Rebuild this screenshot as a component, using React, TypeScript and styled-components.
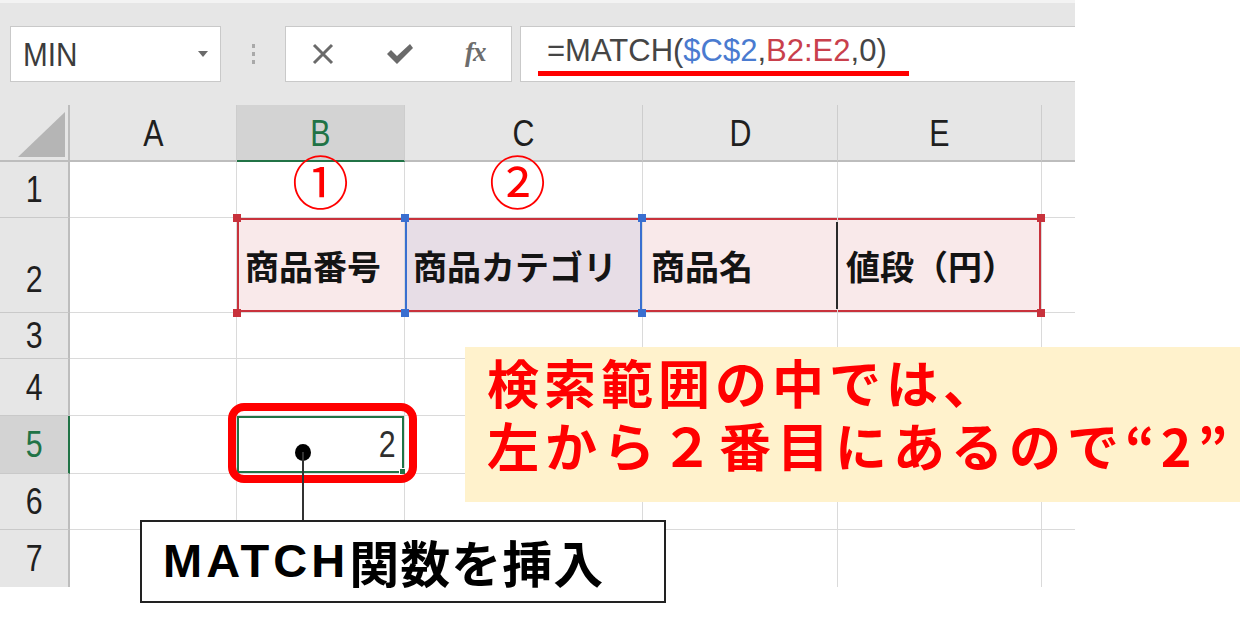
import React from "react";
import styled, { createGlobalStyle } from "styled-components";

const Global = createGlobalStyle`
  html, body { margin: 0; padding: 0; background: #ffffff; }
  body { font-family: "Liberation Sans", "Noto Sans CJK JP", sans-serif; }
`;

const LATIN = `"Liberation Sans", "Noto Sans CJK JP", sans-serif`;
const CJK = `"Noto Sans CJK JP", "Noto Sans", sans-serif`;

const Page = styled.div`
  position: relative;
  width: 1240px;
  height: 622px;
  overflow: hidden;
  background: #ffffff;
`;

const Sheet = styled.div`
  width: 1075px;
  display: flex;
  flex-direction: column;
  overflow: hidden;
`;

const Toolbar = styled.div`
  height: 105px;
  box-sizing: border-box;
  background: #e6e6e6;
  border-top: 3px solid #f3f3f3;
  display: flex;
  align-items: flex-start;
  padding: 23px 0 0 10px;
`;

const NameBox = styled.div`
  width: 211px;
  height: 56px;
  flex: none;
  box-sizing: border-box;
  background: #ffffff;
  border: 1px solid #c9c9c9;
  display: flex;
  align-items: center;
  justify-content: space-between;
  padding: 0 12px 0 9px;
  font-family: ${LATIN};
  color: #3c3c3c;
`;

const Narrow = styled.span<{ $size: number; $scale?: number }>`
  display: inline-block;
  font-family: ${LATIN};
  font-size: ${(p) => p.$size}px;
  line-height: 1;
  transform: scaleX(${(p) => p.$scale ?? 0.82});
  transform-origin: center;
`;

const Caret = styled.span`
  width: 0;
  height: 0;
  border-left: 5px solid transparent;
  border-right: 5px solid transparent;
  border-top: 6px solid #6a6a6a;
`;

const Grip = styled.div`
  width: 64px;
  height: 56px;
  flex: none;
  display: flex;
  flex-direction: column;
  align-items: center;
  justify-content: center;
  gap: 4px;
`;

const GripDot = styled.span`
  width: 3px;
  height: 4px;
  background: #a9a9a9;
`;

const FnBox = styled.div`
  width: 227px;
  height: 56px;
  flex: none;
  margin-right: 8px;
  box-sizing: border-box;
  background: #ffffff;
  border: 1px solid #c9c9c9;
  display: flex;
  align-items: center;
  justify-content: space-around;
  color: #6a6a6a;
`;

const Fx = styled.span`
  font-family: "Liberation Serif", "DejaVu Serif", serif;
  font-style: italic;
  font-weight: 700;
  font-size: 27px;
  color: #6d6d6d;
  letter-spacing: -1px;
  margin-top: -4px;
`;

const FormulaBox = styled.div`
  flex: 1;
  height: 56px;
  box-sizing: border-box;
  background: #ffffff;
  border: 1px solid #c9c9c9;
  border-right: none;
  display: flex;
  align-items: center;
  padding: 0 0 7px 26px;
  white-space: nowrap;
`;

const Formula = styled.span`
  position: relative;
  font-family: "Liberation Sans", sans-serif;
  font-size: 31px;
  color: #454545;
  &::after {
    content: "";
    position: absolute;
    left: -9px;
    right: -22px;
    bottom: -7px;
    height: 5px;
    background: #ff0000;
  }
`;

const Ref = styled.span<{ $c: string }>`
  color: ${(p) => p.$c};
`;

const Grid = styled.div`
  display: grid;
  grid-template-columns: 70px 167px 168px 238px 195px 204px 33px;
  grid-template-rows: 57px 56px 95px 46px 57px 58px 56px 57px;
`;

const Corner = styled.div`
  position: relative;
  box-sizing: border-box;
  background: #e6e6e6;
  border-right: 2px solid #bdbdbd;
  border-bottom: 2px solid #bdbdbd;
  &::after {
    content: "";
    position: absolute;
    right: 3px;
    bottom: 3px;
    width: 0;
    height: 0;
    border-left: 47px solid transparent;
    border-bottom: 45px solid #b5b5b5;
  }
`;

const ColHead = styled.div<{ $active?: boolean; $last?: boolean }>`
  box-sizing: border-box;
  background: ${(p) => (p.$active ? "#d3d3d3" : "#e6e6e6")};
  border-right: ${(p) => (p.$last ? "none" : "1px solid #cdcdcd")};
  border-bottom: 2px solid ${(p) => (p.$active ? "#217346" : "#bdbdbd")};
  display: flex;
  align-items: center;
  justify-content: center;
  color: ${(p) => (p.$active ? "#217346" : "#1f1f1f")};
  padding-top: 2px;
`;

const RowHead = styled.div<{ $active?: boolean; $bottom?: boolean; $last?: boolean }>`
  box-sizing: border-box;
  background: ${(p) => (p.$active ? "#d3d3d3" : "#e6e6e6")};
  border-right: 2px solid ${(p) => (p.$active ? "#217346" : "#bdbdbd")};
  border-bottom: ${(p) => (p.$last ? "none" : "1px solid #c9c9c9")};
  display: flex;
  align-items: ${(p) => (p.$bottom ? "flex-end" : "center")};
  justify-content: center;
  padding-bottom: ${(p) => (p.$bottom ? "14px" : "0")};
  color: ${(p) => (p.$active ? "#217346" : "#1f1f1f")};
`;

const Cell = styled.div<{
  $fill?: string;
  $shadow?: string;
  $align?: string;
  $noRight?: boolean;
  $last?: boolean;
}>`
  position: relative;
  box-sizing: border-box;
  background: ${(p) => p.$fill || "#ffffff"};
  border-right: ${(p) => (p.$noRight ? "none" : "1px solid #dadada")};
  border-bottom: ${(p) => (p.$last ? "none" : "1px solid #dadada")};
  box-shadow: ${(p) => p.$shadow || "none"};
  display: flex;
  align-items: center;
  justify-content: ${(p) => p.$align || "flex-start"};
`;

const HeaderText = styled.span`
  font-family: ${CJK};
  font-weight: 700;
  font-size: 34px;
  color: #141414;
  padding-left: 8px;
  white-space: nowrap;
`;

const Circled = styled.span<{ $shift?: number }>`
  font-family: ${CJK};
  font-size: 57px;
  line-height: 34px;
  height: 34px;
  color: #ff0000;
  margin-top: -22px;
  margin-right: ${(p) => p.$shift || 0}px;
`;

const Handle = styled.span<{ $color: string; $x: "left" | "right"; $y: "top" | "bottom" }>`
  position: absolute;
  z-index: 3;
  width: 8px;
  height: 8px;
  background: ${(p) => p.$color};
  ${(p) => (p.$x === "left" ? "left: -4px;" : "right: -4px;")}
  ${(p) => (p.$y === "top" ? "top: -4px;" : "bottom: -5px;")}
`;

const Caretline = styled.span`
  position: absolute;
  left: -2px;
  top: 4px;
  bottom: 3px;
  width: 2px;
  background: #2a2a2a;
`;

const Value = styled.span`
  color: #2f2f2f;
  padding-right: 6px;
`;

const FillHandle = styled.span`
  position: absolute;
  right: -2px;
  bottom: -2px;
  width: 6px;
  height: 6px;
  background: #217346;
  border-left: 1px solid #ffffff;
  border-top: 1px solid #ffffff;
`;

const Callout = styled.div`
  position: absolute;
  left: 465px;
  top: 347px;
  right: 0;
  height: 155px;
  box-sizing: border-box;
  background: #fff2cc;
  padding: 3px 0 0 22px;
  font-family: ${CJK};
  font-weight: 700;
  font-size: 52px;
  line-height: 63px;
  letter-spacing: 5px;
  color: #ff0000;
  white-space: nowrap;
`;

const CalloutLine = styled.div<{ $spacing?: number }>`
  letter-spacing: ${(p) => p.$spacing ?? 5}px;
`;

const RedFrame = styled.div`
  position: absolute;
  left: 228px;
  top: 403px;
  width: 189px;
  height: 80px;
  box-sizing: border-box;
  border: 8px solid #ff0000;
  border-radius: 16px;
`;

const PinDot = styled.div`
  position: absolute;
  left: 295px;
  top: 444px;
  width: 16px;
  height: 17px;
  border-radius: 50%;
  background: #000000;
`;

const PinLine = styled.div`
  position: absolute;
  left: 302px;
  top: 452px;
  width: 2px;
  height: 70px;
  background: #333333;
`;

const Label = styled.div`
  position: absolute;
  left: 140px;
  top: 520px;
  width: 526px;
  height: 83px;
  box-sizing: border-box;
  border: 2px solid #222222;
  background: #ffffff;
  display: flex;
  align-items: center;
  padding: 0 0 2px 21px;
  font-family: "Noto Sans CJK JP", sans-serif;
  font-weight: 700;
  font-size: 50px;
  letter-spacing: 1px;
  color: #000000;
  white-space: nowrap;
`;

const Latin = styled.span`
  font-family: "Liberation Sans", sans-serif;
  font-weight: 700;
  font-size: 47px;
  letter-spacing: 4px;
`;

const RED = "#c8323c";
const BLUE = "#3a6fd0";

const cols = ["A", "B", "C", "D", "E", ""];

export default function App() {
  const rows = [1, 2, 3, 4, 5, 6, 7];
  return (
    <Page>
      <Global />
      <Sheet>
        <Toolbar>
          <NameBox>
            <Narrow $size={33} $scale={0.9}>MIN</Narrow>
            <Caret />
          </NameBox>
          <Grip>
            <GripDot />
            <GripDot />
            <GripDot />
          </Grip>
          <FnBox>
            <svg width="24" height="24" viewBox="0 0 24 24">
              <path d="M3 3 L21 21 M21 3 L3 21" stroke="#6a6a6a" strokeWidth="3" fill="none" />
            </svg>
            <svg width="28" height="24" viewBox="0 0 28 24">
              <path d="M1 12 L5 8 L11 14 L24 2 L27 6 L11 22 Z" fill="#6a6a6a" />
            </svg>
            <Fx>fx</Fx>
          </FnBox>
          <FormulaBox>
            <Formula>
              =MATCH(<Ref $c="#4a7bd0">$C$2</Ref>,<Ref $c="#c9404c">B2:E2</Ref>,0)
            </Formula>
          </FormulaBox>
        </Toolbar>
        <Grid>
          <Corner />
          {cols.map((c, i) => (
            <ColHead key={c + i} $active={c === "B"} $last={i === cols.length - 1}>
              <Narrow $size={37}>{c}</Narrow>
            </ColHead>
          ))}
          {rows.map((r) => {
            const last = r === 7;
            return (
              <React.Fragment key={r}>
                <RowHead $active={r === 5} $bottom={r === 2} $last={last}>
                  <Narrow $size={37}>{r}</Narrow>
                </RowHead>
                {r === 1 && (
                  <>
                    <Cell />
                    <Cell $align="center">
                      <Circled>①</Circled>
                    </Cell>
                    <Cell $align="center">
                      <Circled $shift={12}>②</Circled>
                    </Cell>
                    <Cell />
                    <Cell />
                    <Cell $noRight />
                  </>
                )}
                {r === 2 && (
                  <>
                    <Cell />
                    <Cell
                      $fill="#f9e9ea"
                      $shadow={`inset 2px 0 0 ${RED}, inset 0 2px 0 ${RED}, inset 0 -2px 0 ${RED}`}
                    >
                      <Handle $color={RED} $x="left" $y="top" />
                      <Handle $color={RED} $x="left" $y="bottom" />
                      <HeaderText>商品番号</HeaderText>
                    </Cell>
                    <Cell
                      $fill="#e7dde6"
                      $shadow={`inset 2px 0 0 ${BLUE}, inset -2px 0 0 ${BLUE}, inset 0 2px 0 ${RED}, inset 0 -2px 0 ${RED}`}
                    >
                      <Handle $color={BLUE} $x="left" $y="top" />
                      <Handle $color={BLUE} $x="left" $y="bottom" />
                      <Handle $color={BLUE} $x="right" $y="top" />
                      <Handle $color={BLUE} $x="right" $y="bottom" />
                      <HeaderText>商品カテゴリ</HeaderText>
                    </Cell>
                    <Cell
                      $fill="#f9e9ea"
                      $shadow={`inset 0 2px 0 ${RED}, inset 0 -2px 0 ${RED}`}
                    >
                      <HeaderText>商品名</HeaderText>
                    </Cell>
                    <Cell
                      $fill="#f9e9ea"
                      $shadow={`inset -2px 0 0 ${RED}, inset 0 2px 0 ${RED}, inset 0 -2px 0 ${RED}`}
                    >
                      <Caretline />
                      <Handle $color={RED} $x="right" $y="top" />
                      <Handle $color={RED} $x="right" $y="bottom" />
                      <HeaderText>値段（円）</HeaderText>
                    </Cell>
                    <Cell $noRight />
                  </>
                )}
                {r === 5 && (
                  <>
                    <Cell />
                    <Cell $align="flex-end" $shadow="inset 0 0 0 2px #217346">
                      <Value>
                        <Narrow $size={37}>2</Narrow>
                      </Value>
                      <FillHandle />
                    </Cell>
                    <Cell />
                    <Cell />
                    <Cell />
                    <Cell $noRight />
                  </>
                )}
                {r !== 1 && r !== 2 && r !== 5 && (
                  <>
                    <Cell $last={last} />
                    <Cell $last={last} />
                    <Cell $last={last} />
                    <Cell $last={last} />
                    <Cell $last={last} />
                    <Cell $last={last} $noRight />
                  </>
                )}
              </React.Fragment>
            );
          })}
        </Grid>
      </Sheet>
      <Callout>
        <CalloutLine>検索範囲の中では、</CalloutLine>
        <CalloutLine $spacing={6}>左から２番目にあるので“2”</CalloutLine>
      </Callout>
      <RedFrame />
      <PinDot />
      <PinLine />
      <Label>
        <Latin>MATCH</Latin>関数を挿入
      </Label>
    </Page>
  );
}
